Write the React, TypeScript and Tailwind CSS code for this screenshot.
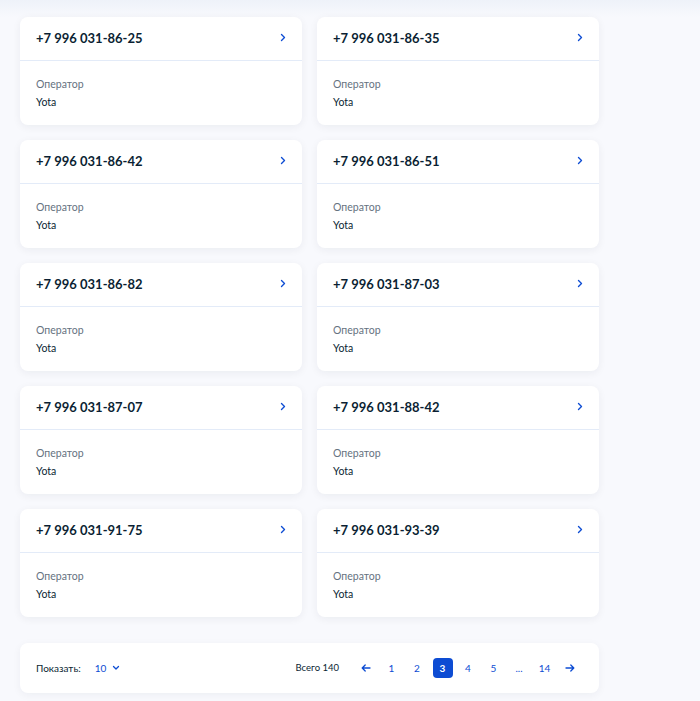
import React from "react";

const phones = [
  "+7 996 031-86-25",
  "+7 996 031-86-35",
  "+7 996 031-86-42",
  "+7 996 031-86-51",
  "+7 996 031-86-82",
  "+7 996 031-87-03",
  "+7 996 031-87-07",
  "+7 996 031-88-42",
  "+7 996 031-91-75",
  "+7 996 031-93-39",
];

function Chevron() {
  return (
    <svg width="6" height="9" viewBox="0 0 6 9" fill="none">
      <path d="M1.5 1.5L4.5 4.5L1.5 7.5" stroke="#0d4cd3" strokeWidth="1.4" strokeLinecap="round" strokeLinejoin="round" />
    </svg>
  );
}

function Card({ phone }: { phone: string }) {
  return (
    <div className="bg-white rounded-[8px] shadow-[0_2px_8px_rgba(11,31,51,0.06)] h-[108px] flex flex-col">
      <div className="h-[44px] flex items-center justify-between pl-[16px] pr-[16px] border-b border-[#e3ebf8]">
        <span className="text-[13px] font-bold text-[#0b1f33] leading-none">{phone}</span>
        <span className="-mt-[2px] flex">
          <Chevron />
        </span>
      </div>
      <div className="pl-[16px] pt-[16px] flex flex-col">
        <span className="text-[10.5px] text-[#66727f] leading-[15px]">Оператор</span>
        <span className="text-[10.5px] text-[#0b1f33] leading-[15px] mt-[3px]">Yota</span>
      </div>
    </div>
  );
}

export default function App() {
  const pages = ["1", "2", "3", "4", "5", "...", "14"];
  return (
    <div
      className="w-[700px] h-[701px] bg-[#f8f9fd] overflow-hidden"
      style={{ fontFamily: "Lato, 'Noto Sans', sans-serif" }}
    >
      <div className="bg-gradient-to-b from-[#eef2f9] to-[#f8f9fd] h-[17px]" />
      <div className="pl-[20px]">
        <div className="grid grid-cols-[282px_282px] gap-x-[15px] gap-y-[15px]">
          {phones.map((p) => (
            <Card key={p} phone={p} />
          ))}
        </div>
        <div className="mt-[26px] w-[579px] h-[50px] bg-white rounded-[8px] shadow-[0_2px_8px_rgba(11,31,51,0.05)] flex items-center pl-[16px] pr-[19px]">
          <span className="text-[10px] text-[#0b1f33]">Показать:</span>
          <span className="ml-[14px] text-[10px] text-[#0d4cd3]">10</span>
          <svg className="ml-[6px]" width="8" height="6" viewBox="0 0 8 6" fill="none">
            <path d="M1.5 1.5L4 4L6.5 1.5" stroke="#0d4cd3" strokeWidth="1.3" strokeLinecap="round" strokeLinejoin="round" />
          </svg>
          <span className="ml-auto text-[9.5px] text-[#0b1f33]">Всего 140</span>
          <div className="ml-[17px] flex items-center gap-[5.5px]">
            <span className="w-[20px] h-[20px] flex items-center justify-center">
              <svg width="10" height="8" viewBox="0 0 10 8" fill="none">
                <path d="M9 4H1.5M4.2 1L1.2 4L4.2 7" stroke="#0d4cd3" strokeWidth="1.3" strokeLinecap="round" strokeLinejoin="round" />
              </svg>
            </span>
            {pages.map((p) => (
              <span
                key={p}
                className={
                  p === "3"
                    ? "w-[20px] h-[20px] rounded-[4px] bg-[#0d4cd3] text-white text-[10px] font-bold flex items-center justify-center"
                    : "w-[20px] h-[20px] text-[#0d4cd3] text-[10px] flex items-center justify-center"
                }
              >
                {p}
              </span>
            ))}
            <span className="w-[20px] h-[20px] flex items-center justify-center">
              <svg width="10" height="8" viewBox="0 0 10 8" fill="none">
                <path d="M1 4H8.5M5.8 1L8.8 4L5.8 7" stroke="#0d4cd3" strokeWidth="1.3" strokeLinecap="round" strokeLinejoin="round" />
              </svg>
            </span>
          </div>
        </div>
      </div>
    </div>
  );
}
